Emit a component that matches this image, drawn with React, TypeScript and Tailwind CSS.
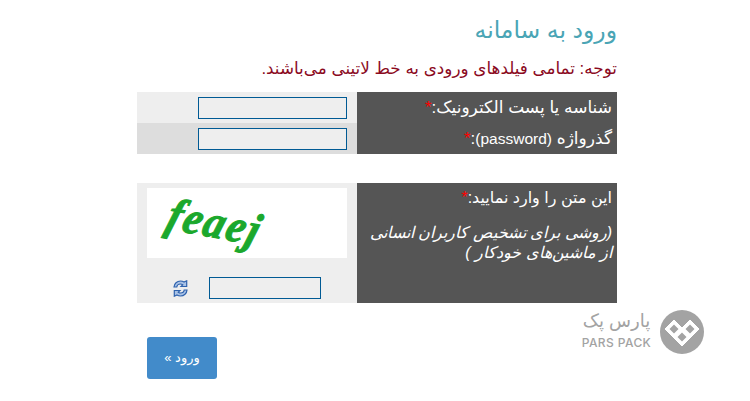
// App.tsx
import React from 'react'

const FONT = "font-['Liberation_Sans','DejaVu_Sans',sans-serif]"

function Req() {
  return <span className="text-[#f00]">*</span>
}

function Campo({ className = 'w-[149px]' }: { className?: string }) {
  return <input className={`h-[22px] border border-[#005a94] bg-[#eee] ${className}`} />
}

function RefreshIcon() {
  return (
    <svg width="15" height="17" viewBox="0 0 15 17" fill="#a9c2e6" stroke="#2f62ad" strokeWidth="1.200">
      <path d="M1 7C1.200 3.500 4 1 7.500 1c1.500 0 2.600.4 3.500 1L13.700.8V6.500H8L9.700 4.800C9 4.300 8.300 4 7.500 4 5.500 4 4 5.300 3.800 7z" />
      <path d="M14 10c-.2 3.500-3 6-6.500 6-1.500 0-2.600-.4-3.500-1l-2.700 1.200V10.500H7L5.300 12.200c.7.500 1.400.8 2.200.8 2 0 3.500-1.300 3.700-3z" />
    </svg>
  )
}

function LogoPars() {
  return (
    <div dir="ltr" className="flex items-start gap-[10px]">
      <div className="flex w-[67px] flex-col items-center whitespace-nowrap text-[#a3a3a3]">
        <span dir="rtl" className="text-[18px] leading-[23px] font-normal">پارس پک</span>
        <span className="mt-[3px] font-['Inter',sans-serif] text-[12px] leading-[13px] font-medium tracking-[0.400px]">PARS PACK</span>
      </div>
      <svg width="44" height="44" viewBox="0 0 44 44">
        <circle cx="22" cy="22" r="22" fill="#a3a3a3" />
        <path d="M14 10l8 8 8-8 9 9-17 17L5 19z" fill="#fff" stroke="#fff" strokeLinejoin="round" />
        <path d="M14 14.500l4.500 4.500-4.500 4.500L9.500 19zM30 14.500l4.500 4.500-4.500 4.500-4.500-4.500zM22 22.500l4.500 4.500-4.500 4.500-4.500-4.500z" fill="#a3a3a3" />
      </svg>
    </div>
  )
}

export default function App() {
  return (
    <div dir="rtl" className={`${FONT} relative h-[401px] w-[750px] overflow-hidden bg-white pt-[14px] pr-[133px] pl-[133px]`}>
      <h1 className="text-[23.500px] leading-[32px] font-normal text-[#4aa5b5]">ورود به سامانه</h1>
      <p className="mt-[10px] text-[16.800px] leading-[26px] whitespace-nowrap text-[#8b0a1e]">توجه: تمامی فیلدهای ورودی به خط لاتینی می‌باشند.</p>

      <div className="mt-[10px] grid grid-cols-[260px_220px] text-[17px] text-white">
        <div className="flex h-[31px] items-center bg-[#555] pr-[5px]">
          <span>شناسه یا پست الکترونیک:<Req /></span>
        </div>
        <div className="flex h-[31px] items-center bg-[#eee] pr-[10px]">
          <Campo />
        </div>
        <div className="flex h-[31px] items-center bg-[#555] pr-[5px]">
          <span>گذرواژه <span className="text-[15.500px]">(password)</span>:<Req /></span>
        </div>
        <div className="flex h-[31px] items-center bg-[#ddd] pr-[10px]">
          <Campo />
        </div>
      </div>

      <div className="mt-[29px] grid h-[120px] grid-cols-[260px_220px] text-[16px] text-white">
        <div className="bg-[#555] pt-[4px] pr-[5px] pl-[5px]">
          <div className="leading-[22px]">این متن را وارد نمایید:<Req /></div>
          <div className="mt-[14px] leading-[20px] italic">(روشی برای تشخیص کاربران انسانی از ماشین‌های خودکار )</div>
        </div>
        <div className="flex flex-col bg-[#eee] pt-[5px] pr-[10px]">
          <div dir="ltr" className="flex h-[70px] w-[200px] items-center bg-white pl-[19px]">
            <span className="-skew-x-[18deg] skew-y-[10deg] font-['Liberation_Serif',serif] text-[44px] leading-none font-bold tracking-[2px] text-[#1ba82c] italic [-webkit-text-stroke:1px_#1ba82c]">feaej</span>
          </div>
          <div className="mt-[19px] flex items-center">
            <Campo className="mr-[26px] w-[112px]" />
            <span className="mr-[21px] flex"><RefreshIcon /></span>
          </div>
        </div>
      </div>

      <div className="mt-[34px] flex justify-end pl-[14px]">
        <button className="flex h-[42px] w-[70px] items-center justify-center rounded-[3px] bg-[#428bca] text-[13px] text-white">ورود »</button>
      </div>

      <div className="absolute top-[310px] left-[583px]">
        <LogoPars />
      </div>
    </div>
  )
}
